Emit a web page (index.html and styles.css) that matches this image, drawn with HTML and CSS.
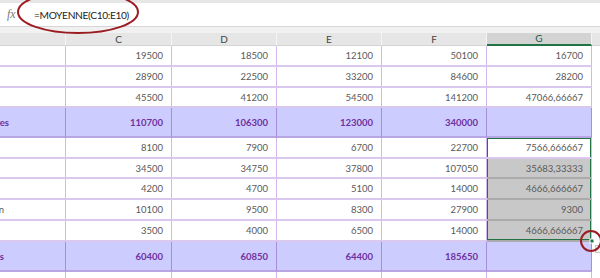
FILE: index.html
```html
<!DOCTYPE html>
<html lang="fr">
<head>
    <meta charset="UTF-8">
    <title>Moyenne des charges</title>
    <link rel="stylesheet" href="styles.css">
</head>
<body>
    <div class="top-strip"></div>
    <div class="formula-bar">
        <span class="fx">fx</span>
        <span class="formula">=MOYENNE(C10:E10)</span>
    </div>
    <div class="spacer"></div>

    <div class="sheet">
        <!-- column headers -->
        <div class="head"></div>
        <div class="head">C</div>
        <div class="head">D</div>
        <div class="head">E</div>
        <div class="head">F</div>
        <div class="head head-active">G</div>
        <div class="head head-rest"></div>

        <div class="cell label"></div>
        <div class="cell">19500</div>
        <div class="cell">18500</div>
        <div class="cell">12100</div>
        <div class="cell">50100</div>
        <div class="cell">16700</div>
        <div class="rest"></div>

        <div class="cell label"></div>
        <div class="cell">28900</div>
        <div class="cell">22500</div>
        <div class="cell">33200</div>
        <div class="cell">84600</div>
        <div class="cell">28200</div>
        <div class="rest"></div>

        <div class="cell label"></div>
        <div class="cell">45500</div>
        <div class="cell">41200</div>
        <div class="cell">54500</div>
        <div class="cell">141200</div>
        <div class="cell">47066,66667</div>
        <div class="rest"></div>

        <div class="cell total label"><span>Total des recettes</span></div>
        <div class="cell total">110700</div>
        <div class="cell total">106300</div>
        <div class="cell total">123000</div>
        <div class="cell total">340000</div>
        <div class="cell total"></div>
        <div class="rest"></div>

        <div class="cell label"></div>
        <div class="cell">8100</div>
        <div class="cell">7900</div>
        <div class="cell">6700</div>
        <div class="cell">22700</div>
        <div class="cell sel sel-first">7566,666667</div>
        <div class="rest"></div>

        <div class="cell label"></div>
        <div class="cell">34500</div>
        <div class="cell">34750</div>
        <div class="cell">37800</div>
        <div class="cell">107050</div>
        <div class="cell sel picked">35683,33333</div>
        <div class="rest"></div>

        <div class="cell label"></div>
        <div class="cell">4200</div>
        <div class="cell">4700</div>
        <div class="cell">5100</div>
        <div class="cell">14000</div>
        <div class="cell sel picked">4666,666667</div>
        <div class="rest"></div>

        <div class="cell label label-short"><span>Formation</span></div>
        <div class="cell">10100</div>
        <div class="cell">9500</div>
        <div class="cell">8300</div>
        <div class="cell">27900</div>
        <div class="cell sel picked">9300</div>
        <div class="rest"></div>

        <div class="cell label"></div>
        <div class="cell">3500</div>
        <div class="cell">4000</div>
        <div class="cell">6500</div>
        <div class="cell">14000</div>
        <div class="cell sel picked sel-last">4666,666667</div>
        <div class="rest"></div>

        <div class="cell total label label-short"><span>Total des charges</span></div>
        <div class="cell total">60400</div>
        <div class="cell total">60850</div>
        <div class="cell total">64400</div>
        <div class="cell total">185650</div>
        <div class="cell total"></div>
        <div class="rest"></div>

        <div class="cell blank"></div>
        <div class="cell blank"></div>
        <div class="cell blank"></div>
        <div class="cell blank"></div>
        <div class="cell blank"></div>
        <div class="cell blank"></div>
        <div class="rest"></div>
    </div>

    <!-- red annotation circles drawn over the sheet -->
    <svg class="marks" width="600" height="278" viewBox="0 0 600 278">
        <rect x="590" y="239" width="4" height="4" fill="#217346" stroke="#fff" stroke-width="1"/>
        <rect x="595.5" y="245.5" width="8" height="7" fill="#f3f3f3" stroke="#c8c8c8"/>
        <ellipse cx="78" cy="12" rx="60" ry="21" fill="none" stroke="#9b1d22" stroke-width="2"/>
        <circle cx="591" cy="241" r="10" fill="none" stroke="#9b1d22" stroke-width="2"/>
    </svg>
</body>
</html>
```

FILE: styles.css
```css
body {
    margin: 0;
    width: 600px;
    height: 278px;
    overflow: hidden;
    position: relative;
    background: #fff;
    font-family: 'Lato', 'Liberation Sans', sans-serif;
}

.top-strip {
    height: 3px;
    background: #e6e6e6;
}

.formula-bar {
    height: 23px;
    display: flex;
    align-items: center;
    background: #fff;
    border-bottom: 1px solid #d6d6d6;
}

.fx {
    width: 34px;
    padding-left: 7px;
    box-sizing: border-box;
    font-family: 'Liberation Serif', serif;
    font-style: italic;
    font-size: 12px;
    color: #7a7a7a;
}

.formula {
    font-size: 10.2px;
    letter-spacing: -0.35px;
    color: #222;
}

.spacer {
    height: 6px;
    background: #f1f1f1;
}

.sheet {
    display: grid;
    grid-template-columns: 66px 106px 105px 105px 105px 105px 1fr;
    grid-template-rows: 13px 21px 21px 20px 30px 21px 20px 21px 21px 21px 30px 1fr;
    height: 245px;
}

.head {
    background: #e6e6e6;
    border-right: 1px solid #f4f4f4;
    border-bottom: 1px solid #d4d4d4;
    font-size: 10px;
    color: #444;
    text-align: center;
    line-height: 12px;
}

.head-active {
    background: #d3d3d3;
    color: #1e5e3a;
    border-bottom: 2px solid #217346;
    line-height: 11px;
}

.head-rest {
    border-right: none;
}

.cell {
    display: flex;
    align-items: center;
    justify-content: flex-end;
    padding-right: 8px;
    font-size: 9.5px;
    color: #5a5a5a;
    border-right: 1px solid #d3b8ed;
    border-bottom: 2px solid #dbc8ef;
    white-space: nowrap;
    overflow: hidden;
}

.label {
    padding-right: 56px;
}

.label-short {
    padding-right: 61px;
}

.total {
    background: #ccccff;
    color: #7030a0;
    font-weight: bold;
    border-right-color: #a58ed8;
    border-bottom-color: #b7a5e4;
}

.sel {
    box-shadow: inset 1px 0 #217346, inset -1px 0 #217346;
}

.sel-first {
    box-shadow: inset 1px 0 #217346, inset -1px 0 #217346, inset 0 1px #217346;
}

.sel-last {
    box-shadow: inset 1px 0 #217346, inset -1px 0 #217346, inset 0 -1px #217346;
}

.picked {
    background: #c8c8c8;
    border-bottom-color: #ababab;
}

.blank {
    border-bottom: none;
}

.rest {
    background: #fff;
}

.marks {
    position: absolute;
    left: 0;
    top: 0;
    pointer-events: none;
}
```
